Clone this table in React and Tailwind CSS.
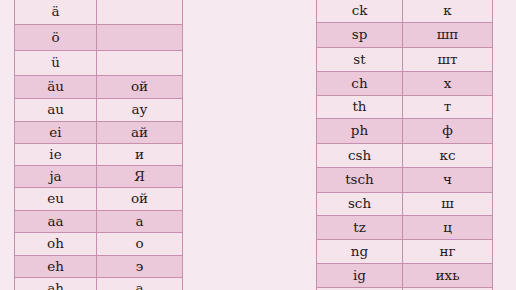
const leftRows = [
  ['ä', '', 'h-[25px]'],
  ['ö', '', 'h-[26px]'],
  ['ü', '', 'h-[25px]'],
  ['äu', 'ой', 'h-[23px]'],
  ['au', 'ау', 'h-[23px]'],
  ['ei', 'ай', 'h-[22px]'],
  ['ie', 'и', 'h-[22px]'],
  ['ja', 'Я', 'h-[22px]'],
  ['eu', 'ой', 'h-[23px]'],
  ['aa', 'а', 'h-[22px]'],
  ['oh', 'о', 'h-[23px]'],
  ['eh', 'э', 'h-[22px]'],
  ['ah', 'а', 'h-[22px]'],
]

const rightRows = [
  ['ck', 'к', 'h-[23px]'],
  ['sp', 'шп', 'h-[25px]'],
  ['st', 'шт', 'h-[24px]'],
  ['ch', 'х', 'h-[24px]'],
  ['th', 'т', 'h-[23px]'],
  ['ph', 'ф', 'h-[25px]'],
  ['csh', 'кс', 'h-[24px]'],
  ['tsch', 'ч', 'h-[25px]'],
  ['sch', 'ш', 'h-[23px]'],
  ['tz', 'ц', 'h-[24px]'],
  ['ng', 'нг', 'h-[24px]'],
  ['ig', 'ихь', 'h-[24px]'],
  ['', '', 'h-[24px]'],
]

const Table = ({ rows, className, firstCol, secondCol }) => (
  <table className={`border-collapse ${className}`}>
    <tbody>
      {rows.map(([de, ru, h], i) => (
        <tr key={i} className={`${h} ${i % 2 ? 'bg-[#ebc8da]' : 'bg-[#f6e4ed]'}`}>
          <td className={`${firstCol} border border-[#c68fae] p-0 text-center leading-none`}>{de}</td>
          <td className={`${secondCol} border border-[#c68fae] p-0 text-center leading-none`}>{ru}</td>
        </tr>
      ))}
    </tbody>
  </table>
)

export default function App() {
  return (
    <div className="flex h-[290px] w-[516px] items-start overflow-hidden bg-[#f6e9ef] font-['DejaVu_Serif',serif] text-[13.5px] text-[#1f1a1c]">
      <Table rows={leftRows} className="ml-[14px] mt-[-1px]" firstCol="w-[82px]" secondCol="w-[86px]" />
      <Table rows={rightRows} className="ml-[133px] mt-[-1px]" firstCol="w-[86px]" secondCol="w-[90px]" />
    </div>
  )
}
